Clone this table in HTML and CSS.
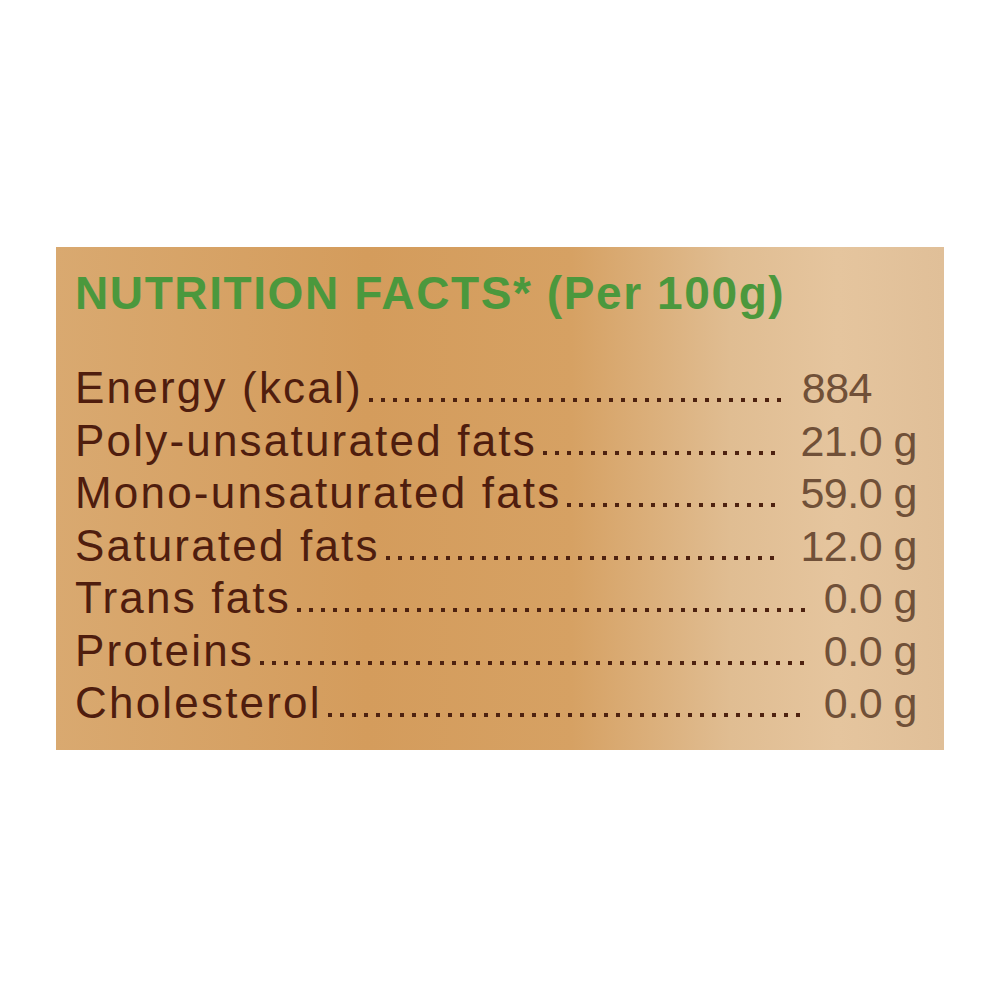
FILE: index.html
```html
<!DOCTYPE html>
<html lang="en">
<head>
  <meta charset="UTF-8" />
  <title>Nutrition Facts</title>
  <link rel="stylesheet" href="styles.css">
</head>
<body>

  <div class="label-panel">
    <h1 class="title">NUTRITION FACTS* (Per 100g)</h1>

    <div class="facts">
      <div class="row">
        <span class="name">Energy (kcal)</span>
        <span class="leader"></span>
        <span class="value value-plain">884</span>
      </div>
      <div class="row">
        <span class="name">Poly-unsaturated fats</span>
        <span class="leader"></span>
        <span class="value">21.0 g</span>
      </div>
      <div class="row">
        <span class="name">Mono-unsaturated fats</span>
        <span class="leader"></span>
        <span class="value">59.0 g</span>
      </div>
      <div class="row">
        <span class="name">Saturated fats</span>
        <span class="leader"></span>
        <span class="value">12.0 g</span>
      </div>
      <div class="row">
        <span class="name">Trans fats</span>
        <span class="leader"></span>
        <span class="value">0.0 g</span>
      </div>
      <div class="row">
        <span class="name">Proteins</span>
        <span class="leader"></span>
        <span class="value">0.0 g</span>
      </div>
      <div class="row">
        <span class="name">Cholesterol</span>
        <span class="leader"></span>
        <span class="value">0.0 g</span>
      </div>
    </div>
  </div>

</body>
</html>
```

FILE: styles.css
```css
body {
  margin: 0;
  background: #fff;
  font-family: "Liberation Sans", Arial, sans-serif;
}

.label-panel {
  width: 888px;
  height: 503px;
  box-sizing: border-box;
  margin: 247px 0 0 56px;
  padding: 20px 27px 0 19px;
  background: linear-gradient(90deg, #d9a970 0%, #d49c5c 35%, #d6a163 58%, #e0bd92 76%, #e5c59e 88%, #e0bf98 100%);
}

.title {
  margin: 0 0 43px;
  font-size: 46px;
  line-height: 52px;
  font-weight: bold;
  letter-spacing: 1.6px;
  color: #4b983d;
}

.row {
  display: flex;
  height: 52.5px;
  line-height: 52.5px;
  font-size: 44px;
}

.name {
  letter-spacing: 2.2px;
  color: #4f1d0e;
  white-space: nowrap;
}

.leader {
  flex: 1;
  margin: 0 18px 0 6px;
  background-image: linear-gradient(90deg, #4e2210 4px, transparent 4px);
  background-size: 12px 4px;
  background-repeat: repeat-x;
  background-position: 0 36px;
}

.value {
  font-size: 43px;
  letter-spacing: -0.5px;
  color: #705038;
  white-space: nowrap;
}

.value-plain {
  padding-right: 45px;
}
```
